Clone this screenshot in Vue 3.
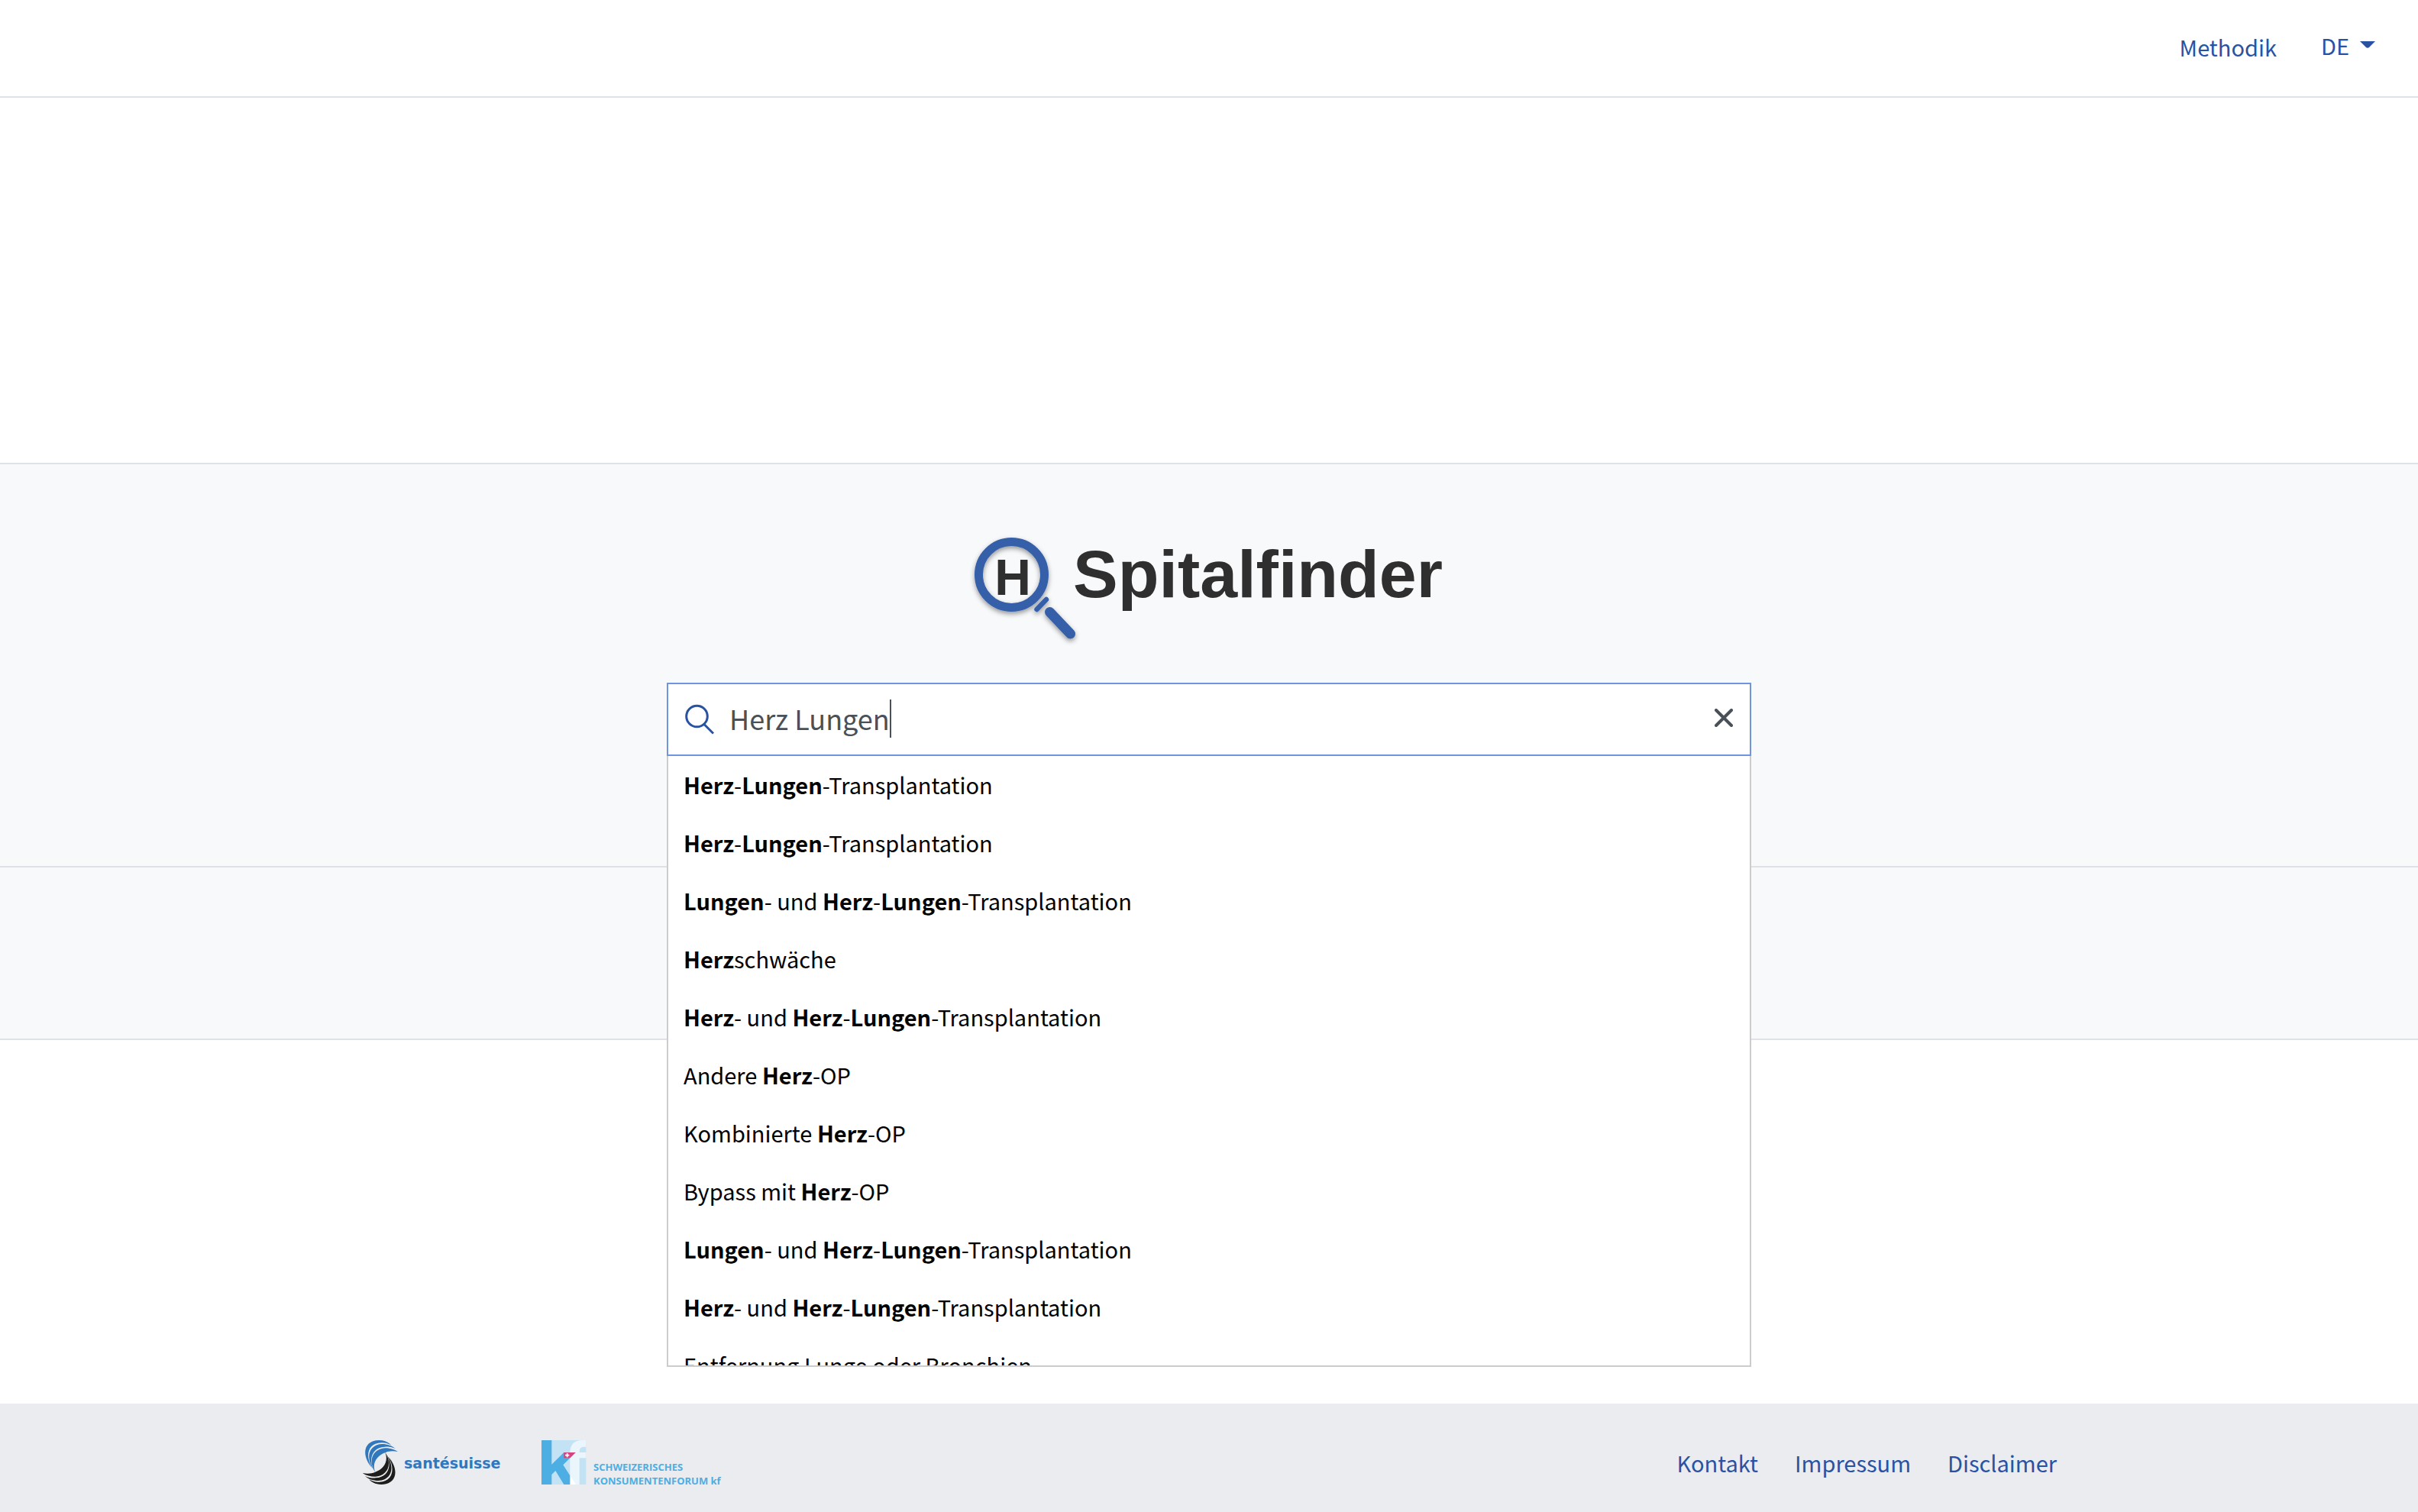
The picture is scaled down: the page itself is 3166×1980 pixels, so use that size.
<template>
  <div class="page">
    <!-- Kopfzeile -->
    <header class="header">
      <nav class="header-nav">
        <a href="#methodik" class="nav-link">Methodik</a>
        <button type="button" class="lang-btn">
          {{ language }}
          <svg class="caret" viewBox="0 0 20 9"><path d="M0 0h20l-7.500 7.500q-2.500 2.500-5 0z" /></svg>
        </button>
      </nav>
    </header>

    <main class="main">
      <section class="hero">
        <h1 class="logo">
          <svg class="logo-svg" viewBox="0 0 618 144" role="img" aria-label="Spitalfinder">
            <defs>
              <filter id="logo-shadow" x="-20%" y="-20%" width="150%" height="150%">
                <feDropShadow dx="0" dy="3" stdDeviation="3" flood-color="#000" flood-opacity="0.4" />
              </filter>
            </defs>
            <g filter="url(#logo-shadow)" fill="none" stroke="#365fa9" stroke-linecap="round">
              <circle cx="50.500" cy="50.500" r="43" stroke-width="11" />
              <path d="M83.500 96l12.500-13" stroke-width="6.500" />
              <path d="M100.500 99.500l27 28.500" stroke-width="13" />
            </g>
            <text x="52" y="77" class="logo-h">H</text>
            <text x="131" y="80" class="logo-text">Spitalfinder</text>
          </svg>
        </h1>

        <div class="search">
          <div class="search-box">
            <label for="search-input" class="search-label" aria-label="Suche">
              <svg class="search-icon" viewBox="0 0 40 40">
                <circle cx="17.500" cy="16" r="13.800" />
                <path d="M27 26.500l12 12" />
              </svg>
            </label>
            <div class="search-field">
              <input id="search-input" ref="searchInput" v-model="query" type="text" class="search-input" autocomplete="off" />
              <span class="text-cursor"></span>
            </div>
            <button type="button" class="clear-btn" aria-label="Löschen" @click="clearQuery">
              <svg class="clear-icon" viewBox="0 0 24 24"><path d="M2 2l20 20M22 2L2 22" /></svg>
            </button>
          </div>

          <!-- Vorschlagsliste -->
          <ul v-if="query" class="suggestions">
            <li v-for="(item, index) in suggestions" :key="index" class="suggestion">
              <template v-for="(part, partIndex) in highlight(item)" :key="partIndex">
                <b v-if="part.match">{{ part.text }}</b>
                <template v-else>{{ part.text }}</template>
              </template>
            </li>
          </ul>
        </div>
      </section>
      <section class="sub-band"></section>
    </main>

    <!-- Fusszeile -->
    <footer class="footer">
      <div class="footer-inner">
        <div class="partners">
          <a href="#santesuisse" class="partner" aria-label="santésuisse">
            <svg class="santesuisse" viewBox="-2 0 186 58">
              <g transform="scale(0.3333)">
                <g fill="#3078be">
                  <path d="M36 108C-8 58 4 0 64 0C88 0 104 10 112 20C98 12 84 8 72 10C20 12 8 60 36 108z" />
                  <path d="M42 116C6 60 30 16 76 15C98 15 116 22 128 33C112 26 98 24 86 26C42 28 20 66 42 116z" />
                  <path d="M50 128C16 76 44 32 88 31C106 31 124 35 138 45C118 41 102 43 90 48C54 60 34 92 50 128z" />
                </g>
                <g transform="rotate(180 68.500 87)" fill="#1d1d1b">
                  <path d="M36 108C-8 58 4 0 64 0C88 0 104 10 112 20C98 12 84 8 72 10C20 12 8 60 36 108z" />
                  <path d="M42 116C6 60 30 16 76 15C98 15 116 22 128 33C112 26 98 24 86 26C42 28 20 66 42 116z" />
                  <path d="M50 128C16 76 44 32 88 31C106 31 124 35 138 45C118 41 102 43 90 48C54 60 34 92 50 128z" />
                </g>
              </g>
              <text x="54" y="37" class="santesuisse-text">santésuisse</text>
            </svg>
          </a>
          <a href="#konsumentenforum" class="partner" aria-label="Schweizerisches Konsumentenforum kf">
            <svg class="konsumentenforum" viewBox="0 0 240 58">
              <g transform="scale(0.3333)">
                <path fill="#c3e3f5" d="M0 0h175v174H0z" />
                <path fill="#ebf5fc" d="M112 174V50C112 18 128 0 160 0h15v26h-8c-12 0-18 6-18 18v4h26v22h-26v104z" />
                <path fill="#fff" d="M112 137l23 37h-23z" />
                <path fill="#4daee3" d="M0 0h40v95l48-47h46L85 97l27 42v35H88L55 120l-15 15v39H0z" />
                <path fill="#d6447f" d="M88 48h46l-22 22H88z" />
                <path stroke="#fff" stroke-width="5" d="M101 51v16M93 59h16" />
              </g>
              <text x="68" y="40" class="konsumentenforum-text">SCHWEIZERISCHES</text>
              <text x="68" y="58" class="konsumentenforum-text">KONSUMENTENFORUM kf</text>
            </svg>
          </a>
        </div>
        <nav class="footer-nav">
          <a v-for="link in footerLinks" :key="link" :href="`#${link.toLowerCase()}`" class="nav-link">{{ link }}</a>
        </nav>
      </div>
    </footer>
  </div>
</template>

<script setup>
import { ref } from 'vue';

const language = ref('DE');
const query = ref('Herz Lungen');
const searchInput = ref(null);

const suggestions = [
  'Herz-Lungen-Transplantation',
  'Herz-Lungen-Transplantation',
  'Lungen- und Herz-Lungen-Transplantation',
  'Herzschwäche',
  'Herz- und Herz-Lungen-Transplantation',
  'Andere Herz-OP',
  'Kombinierte Herz-OP',
  'Bypass mit Herz-OP',
  'Lungen- und Herz-Lungen-Transplantation',
  'Herz- und Herz-Lungen-Transplantation',
  'Entfernung Lunge oder Bronchien',
];

const footerLinks = ['Kontakt', 'Impressum', 'Disclaimer'];

// Suchbegriffe im Vorschlag hervorheben
const highlight = text => {
  const words = query.value.trim().split(/\s+/);
  return text
    .split(new RegExp(`(${words.join('|')})`))
    .filter(Boolean)
    .map(part => ({ text: part, match: words.includes(part) }));
};

const clearQuery = () => {
  query.value = '';
  searchInput.value.focus();
};
</script>

<style>
body {
  margin: 0;
  background: #fff;
}
</style>

<style scoped>
.page {
  display: flex;
  flex-direction: column;
  min-height: 100vh;
  font-family: 'Noto Sans CJK SC', sans-serif;
  font-size: 29px;
  line-height: 48px;
  color: #000;
}

.header {
  display: flex;
  justify-content: flex-end;
  box-sizing: border-box;
  height: 128px;
  padding: 37px 56px 0 0;
  border-bottom: 2px solid #dee2e6;
}

.header-nav {
  display: flex;
  align-items: flex-start;
  gap: 58px;
}

.nav-link {
  color: #2a52a2;
  text-decoration: none;
}

.lang-btn {
  display: flex;
  align-items: center;
  gap: 14px;
  padding: 0;
  border: 0;
  background: none;
  color: #2a52a2;
  font: inherit;
  line-height: 44px;
  cursor: pointer;
}

.caret {
  width: 20px;
  height: 9px;
  margin-bottom: 2px;
  fill: #2a52a2;
}

.main {
  flex: 1;
  padding-top: 478px;
}

.hero {
  box-sizing: border-box;
  height: 530px;
  padding-top: 94px;
  border-top: 2px solid #dee2e6;
  border-bottom: 2px solid #dee2e6;
  background: #f8f9fb;
}

.sub-band {
  height: 224px;
  border-bottom: 2px solid #dee2e6;
  background: #f8f9fb;
}

.logo {
  display: flex;
  justify-content: center;
  margin: 0 0 48px;
}

.logo-svg {
  width: 618px;
  height: 144px;
  overflow: visible;
}

.logo-h,
.logo-text {
  font-family: 'Liberation Sans', sans-serif;
  font-weight: bold;
  font-variant-ligatures: none;
  fill: #2f2f2f;
}

.logo-h {
  font-size: 66px;
  text-anchor: middle;
}

.logo-text {
  font-size: 88px;
}

.search {
  position: relative;
  width: 1420px;
  max-width: 100%;
  margin: 0 auto;
}

.search-box {
  display: flex;
  align-items: center;
  box-sizing: border-box;
  height: 96px;
  padding: 0 22px 0 20px;
  border: 2px solid #6f94e0;
  background: #fff;
}

.search-label {
  display: flex;
}

.search-icon {
  width: 40px;
  height: 40px;
  fill: none;
  stroke: #2a52a2;
  stroke-width: 3;
}

.search-field {
  display: flex;
  flex: 1;
  align-items: center;
  padding: 0 0 2px 20px;
}

.search-input {
  field-sizing: content;
  padding: 0 0 2px;
  border: 0;
  outline: 0;
  background: none;
  color: #495057;
  caret-color: transparent;
  font: inherit;
  font-size: 36px;
}

.text-cursor {
  width: 2px;
  height: 50px;
  background: #495057;
}

.clear-btn {
  display: flex;
  padding: 0 0 4px;
  border: 0;
  background: none;
  cursor: pointer;
}

.clear-icon {
  width: 24px;
  height: 24px;
  fill: none;
  stroke: #495057;
  stroke-width: 4;
  stroke-linecap: round;
}

.suggestions {
  position: absolute;
  top: 100%;
  left: 0;
  right: 0;
  box-sizing: border-box;
  height: 800px;
  margin: 0;
  padding: 0;
  overflow-y: auto;
  scrollbar-width: none;
  border: 2px solid #ccc;
  border-top: 0;
  background: #fff;
  list-style: none;
}

.suggestion {
  padding: 13px 20px 15px;
}

.footer {
  padding: 48px 0 36px;
  background: #ebecf0;
}

.footer-inner {
  display: flex;
  align-items: center;
  justify-content: space-between;
  width: 2220px;
  max-width: 100%;
  margin: 0 auto;
}

.partners {
  display: flex;
  gap: 50px;
}

.partner {
  display: flex;
}

.santesuisse {
  width: 186px;
  height: 58px;
  overflow: visible;
}

.santesuisse-text {
  font-family: 'DejaVu Sans', sans-serif;
  font-size: 19px;
  font-weight: bold;
  fill: #3078be;
}

.konsumentenforum {
  width: 240px;
  height: 58px;
  overflow: visible;
}

.konsumentenforum-text {
  font-family: 'Open Sans', sans-serif;
  font-size: 13px;
  font-weight: bold;
  fill: #4daee3;
}

.footer-nav {
  display: flex;
  gap: 48px;
}
</style>
